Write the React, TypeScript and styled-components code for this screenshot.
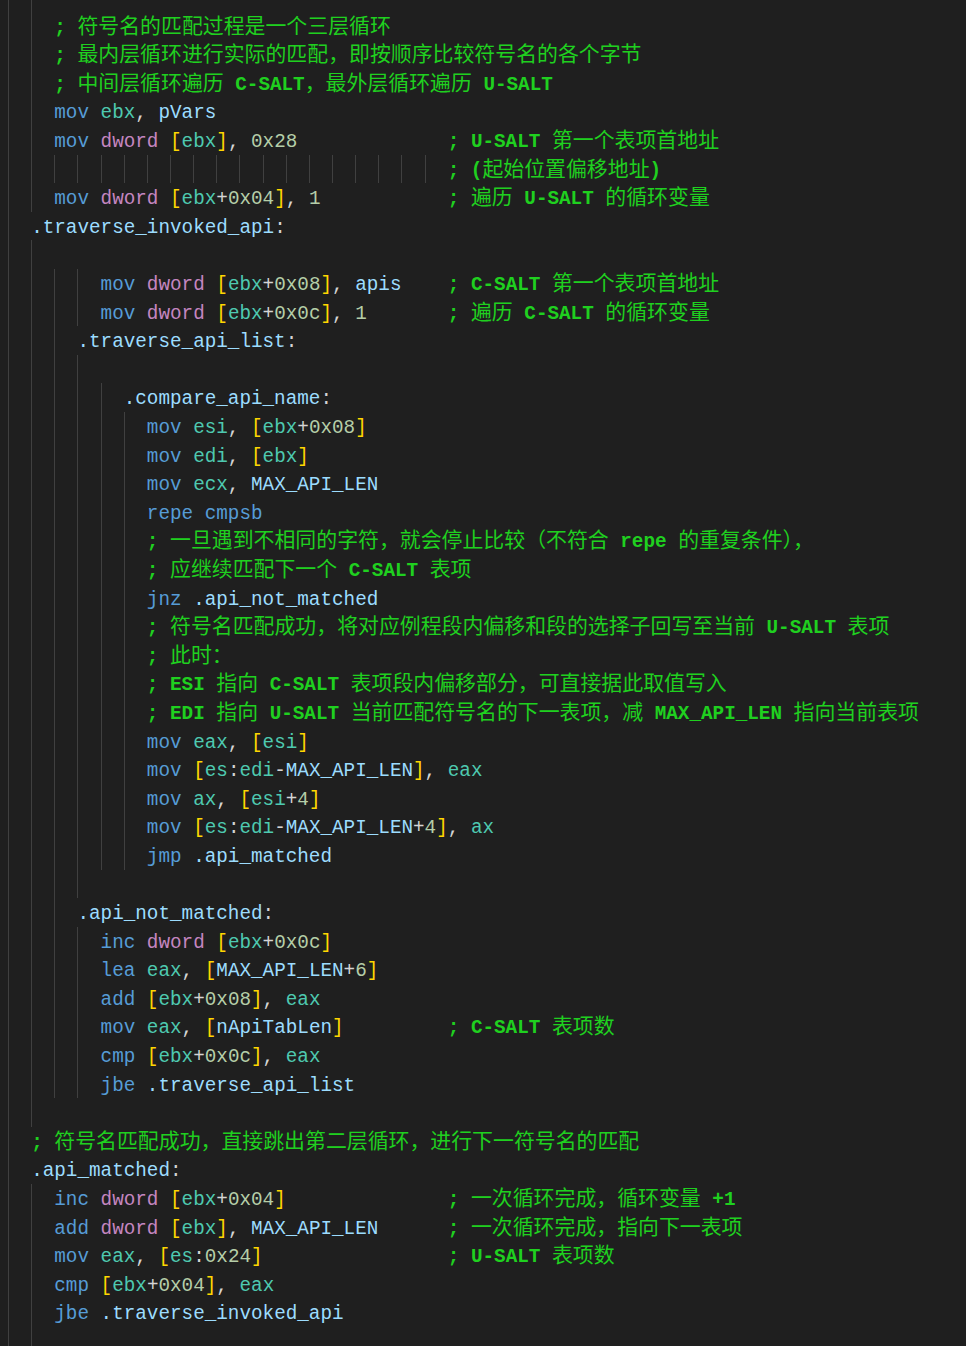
import React from "react";
import styled, { createGlobalStyle } from "styled-components";

const GlobalStyle = createGlobalStyle`
  html, body {
    margin: 0;
    padding: 0;
    background: #1f1f1f;
    overflow: hidden;
  }
`;

const Editor = styled.div`
  box-sizing: border-box;
  height: 1346px;
  overflow: hidden;
  padding-left: 8px;
  background: #1f1f1f;
  font-family: "Liberation Mono", "Noto Sans CJK SC", monospace;
  font-size: 19.3px;
  color: #d4d4d4;
`;

const Line = styled.div<{ $h?: number }>`
  display: flex;
  align-items: stretch;
  height: ${(p) => (p.$h !== undefined ? `${p.$h}px` : "28.6px")};
  line-height: 28.6px;
  white-space: pre;
`;

const Guide = styled.span`
  flex: 0 0 2ch;
  width: 2ch;
  box-sizing: border-box;
  border-left: 1px solid #404040;
`;

const Code = styled.span`
  flex: 0 0 auto;
  padding-top: 2px;
  white-space: pre;
`;

type Kind = "kw" | "reg" | "type" | "br" | "num" | "punc" | "var" | "cmt";

const palette: Record<Kind, string> = {
  kw: "#569cd6",
  reg: "#4ec9b0",
  type: "#c586c0",
  br: "#ffd700",
  num: "#b5cea8",
  punc: "#d4d4d4",
  var: "#9cdcfe",
  cmt: "#1fd01f",
};

const Tok = styled.span<{ $k: Kind }>`
  color: ${(p) => palette[p.$k]};
  font-weight: ${(p) => (p.$k === "cmt" ? 700 : 400)};
`;

const Cjk = styled.span`
  font-family: "Noto Sans CJK SC", sans-serif;
  font-size: 20.9px;
  font-weight: 400;
  line-height: 1;
`;

const KEYWORDS = new Set(["mov", "inc", "lea", "add", "cmp", "jbe", "jnz", "jmp", "repe", "cmpsb"]);
const REGS = new Set(["ebx", "esi", "edi", "ecx", "eax", "ax", "es"]);

function tokenize(code: string): { k: Kind; t: string }[] {
  const out: { k: Kind; t: string }[] = [];
  const re = /(\s+)|(\[|\])|(0x[0-9a-fA-F]+|\d+)|(\.?[A-Za-z_][A-Za-z0-9_]*)|([,+\-:])/g;
  let m: RegExpExecArray | null;
  while ((m = re.exec(code))) {
    if (m[1]) out.push({ k: "punc", t: m[1] });
    else if (m[2]) out.push({ k: "br", t: m[2] });
    else if (m[3]) out.push({ k: "num", t: m[3] });
    else if (m[4]) {
      const w = m[4];
      let k: Kind = "var";
      if (KEYWORDS.has(w)) k = "kw";
      else if (REGS.has(w)) k = "reg";
      else if (w === "dword") k = "type";
      out.push({ k, t: w });
    } else if (m[5]) out.push({ k: "punc", t: m[5] });
  }
  return out;
}

const CJK_RE = /([\u2E80-\u9FFF\u3000-\u303F\uFF00-\uFFEF]+)/;

function Comment({ text }: { text: string }) {
  const parts = text.split(CJK_RE).filter((s) => s.length > 0);
  return (
    <Tok $k="cmt">
      {parts.map((p, i) => (CJK_RE.test(p) ? <Cjk key={i}>{p}</Cjk> : <React.Fragment key={i}>{p}</React.Fragment>))}
    </Tok>
  );
}

type LineDef = { g: number; i?: number; code?: string; cmt?: string; h?: number };

const COMMENT_COL = 38;

const lines: LineDef[] = [
  { g: 2, h: 11.7 },
  { g: 2, i: 4, cmt: "; 符号名的匹配过程是一个三层循环" },
  { g: 2, i: 4, cmt: "; 最内层循环进行实际的匹配，即按顺序比较符号名的各个字节" },
  { g: 2, i: 4, cmt: "; 中间层循环遍历 C-SALT，最外层循环遍历 U-SALT" },
  { g: 2, i: 4, code: "mov ebx, pVars" },
  { g: 2, i: 4, code: "mov dword [ebx], 0x28", cmt: "; U-SALT 第一个表项首地址" },
  { g: 19, i: 38, cmt: "; (起始位置偏移地址)" },
  { g: 2, i: 4, code: "mov dword [ebx+0x04], 1", cmt: "; 遍历 U-SALT 的循环变量" },
  { g: 1, i: 2, code: ".traverse_invoked_api:" },
  { g: 2 },
  { g: 4, i: 8, code: "mov dword [ebx+0x08], apis", cmt: "; C-SALT 第一个表项首地址" },
  { g: 4, i: 8, code: "mov dword [ebx+0x0c], 1", cmt: "; 遍历 C-SALT 的循环变量" },
  { g: 3, i: 6, code: ".traverse_api_list:" },
  { g: 4 },
  { g: 5, i: 10, code: ".compare_api_name:" },
  { g: 6, i: 12, code: "mov esi, [ebx+0x08]" },
  { g: 6, i: 12, code: "mov edi, [ebx]" },
  { g: 6, i: 12, code: "mov ecx, MAX_API_LEN" },
  { g: 6, i: 12, code: "repe cmpsb" },
  { g: 6, i: 12, cmt: "; 一旦遇到不相同的字符，就会停止比较（不符合 repe 的重复条件），" },
  { g: 6, i: 12, cmt: "; 应继续匹配下一个 C-SALT 表项" },
  { g: 6, i: 12, code: "jnz .api_not_matched" },
  { g: 6, i: 12, cmt: "; 符号名匹配成功，将对应例程段内偏移和段的选择子回写至当前 U-SALT 表项" },
  { g: 6, i: 12, cmt: "; 此时：" },
  { g: 6, i: 12, cmt: "; ESI 指向 C-SALT 表项段内偏移部分，可直接据此取值写入" },
  { g: 6, i: 12, cmt: "; EDI 指向 U-SALT 当前匹配符号名的下一表项，减 MAX_API_LEN 指向当前表项" },
  { g: 6, i: 12, code: "mov eax, [esi]" },
  { g: 6, i: 12, code: "mov [es:edi-MAX_API_LEN], eax" },
  { g: 6, i: 12, code: "mov ax, [esi+4]" },
  { g: 6, i: 12, code: "mov [es:edi-MAX_API_LEN+4], ax" },
  { g: 6, i: 12, code: "jmp .api_matched" },
  { g: 4 },
  { g: 3, i: 6, code: ".api_not_matched:" },
  { g: 4, i: 8, code: "inc dword [ebx+0x0c]" },
  { g: 4, i: 8, code: "lea eax, [MAX_API_LEN+6]" },
  { g: 4, i: 8, code: "add [ebx+0x08], eax" },
  { g: 4, i: 8, code: "mov eax, [nApiTabLen]", cmt: "; C-SALT 表项数" },
  { g: 4, i: 8, code: "cmp [ebx+0x0c], eax" },
  { g: 4, i: 8, code: "jbe .traverse_api_list" },
  { g: 2 },
  { g: 1, i: 2, cmt: "; 符号名匹配成功，直接跳出第二层循环，进行下一符号名的匹配" },
  { g: 1, i: 2, code: ".api_matched:" },
  { g: 2, i: 4, code: "inc dword [ebx+0x04]", cmt: "; 一次循环完成，循环变量 +1" },
  { g: 2, i: 4, code: "add dword [ebx], MAX_API_LEN", cmt: "; 一次循环完成，指向下一表项" },
  { g: 2, i: 4, code: "mov eax, [es:0x24]", cmt: "; U-SALT 表项数" },
  { g: 2, i: 4, code: "cmp [ebx+0x04], eax" },
  { g: 2, i: 4, code: "jbe .traverse_invoked_api" },
  { g: 2 },
];

function CodeLine({ def }: { def: LineDef }) {
  const indent = def.i ?? def.g * 2;
  const lead = " ".repeat(Math.max(0, indent - def.g * 2));
  const codeText = def.code ?? "";
  let pad = "";
  if (def.code && def.cmt) {
    pad = " ".repeat(Math.max(1, COMMENT_COL - indent - codeText.length));
  }
  const hasContent = !!(def.code || def.cmt);
  return (
    <Line $h={def.h}>
      {Array.from({ length: def.g }, (_, k) => (
        <Guide key={k} />
      ))}
      {hasContent && (
        <Code>
          {lead}
          {tokenize(codeText).map((tk, k) => (
            <Tok key={k} $k={tk.k}>
              {tk.t}
            </Tok>
          ))}
          {pad}
          {def.cmt && <Comment text={def.cmt} />}
        </Code>
      )}
    </Line>
  );
}

export default function App() {
  return (
    <>
      <GlobalStyle />
      <Editor>
        {lines.map((d, idx) => (
          <CodeLine key={idx} def={d} />
        ))}
      </Editor>
    </>
  );
}
